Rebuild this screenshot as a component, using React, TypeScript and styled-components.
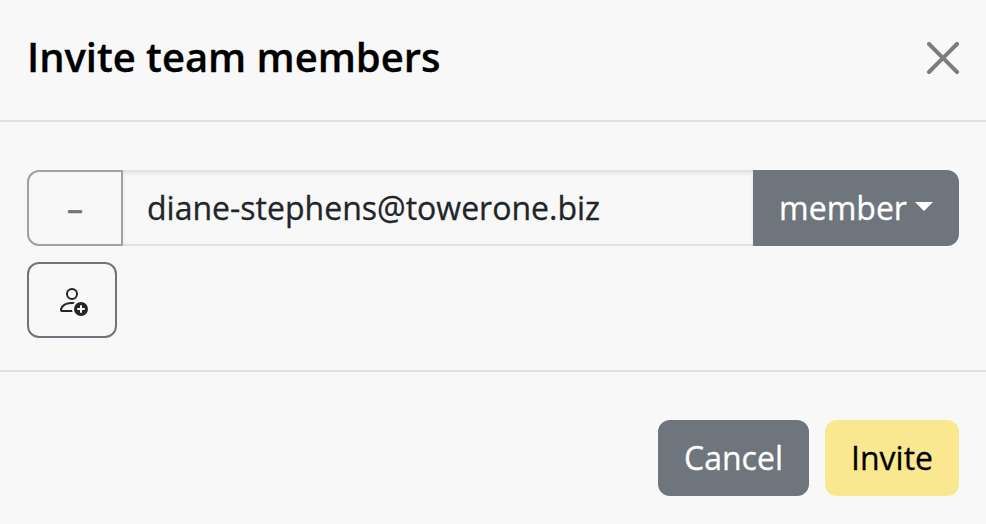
import React from "react";
import styled, { createGlobalStyle, css } from "styled-components";
import { BsPersonAdd } from "react-icons/bs";

const GlobalStyle = createGlobalStyle`
  *, *::before, *::after { box-sizing: border-box; }
  body {
    margin: 0;
    background: #f8f8f8;
    color: #212529;
    font: 400 32px/48px "Open Sans", "Noto Sans", sans-serif;
    -webkit-text-stroke: 0.3px currentColor;
  }
  button, input { font: inherit; margin: 0; }
`;

const Modal = styled.section`
  width: 986px;
  height: 524px;
  display: flex;
  flex-direction: column;
  background: #f8f8f8;
  overflow: hidden;
`;

const Header = styled.header`
  height: 122px;
  padding: 0 27px;
  display: flex;
  align-items: flex-start;
  justify-content: space-between;
  border-bottom: 2px solid #dee2e6;
`;

const Title = styled.h1`
  margin: 27px 0 0;
  font-size: 40px;
  line-height: 60px;
  font-weight: 600;
  letter-spacing: -0.04px;
  color: #000;
`;

const CloseButton = styled.button`
  margin-top: 42px;
  width: 32px;
  height: 32px;
  padding: 0;
  border: 0;
  background: none;
  color: #7c7c7c;
  svg { display: block; }
`;

const Body = styled.div`
  height: 250px;
  padding: 48px 27px 0;
  display: flex;
  flex-direction: column;
  align-items: flex-start;
  gap: 16px;
  border-bottom: 2px solid #dee2e6;
`;

const InviteRow = styled.div`
  width: 100%;
  height: 76px;
  display: flex;
`;

const tones = {
  outline: css`
    border-color: #6c757d;
    background: transparent;
    color: #212529;
  `,
  muted: css`
    border-color: #9da2a6;
    background: transparent;
    color: #757575;
    padding-top: 1px;
    -webkit-text-stroke-width: 0.6px;
  `,
  secondary: css`
    border-color: #6e757c;
    background: #6e757c;
    color: #fff;
  `,
  primary: css`
    border-color: #fae890;
    background: #fae890;
    color: #000;
  `,
};

const Button = styled.button<{
  $tone: keyof typeof tones;
  $width: number;
  $radius?: string;
}>`
  flex: none;
  width: ${(p) => p.$width}px;
  height: 76px;
  padding: 0;
  display: inline-flex;
  align-items: center;
  justify-content: center;
  border: 2px solid;
  border-radius: ${(p) => p.$radius ?? "12px"};
  line-height: 48px;
  white-space: nowrap;
  ${(p) => tones[p.$tone]}
`;

const EmailInput = styled.input`
  flex: 1;
  min-width: 0;
  padding: 0 24px;
  border: solid #dee2e6;
  border-width: 2px 0;
  border-radius: 0;
  background: transparent;
  color: #212529;
  box-shadow: inset 0 2px 4px rgba(0, 0, 0, 0.075);
  outline: none;
`;

const Caret = styled.span`
  margin: -3px 0 0 8px;
  border: solid transparent;
  border-width: 9.6px 9.6px 0;
  border-top-color: currentColor;
`;

const Footer = styled.footer`
  padding: 48px 27px 0;
  display: flex;
  justify-content: flex-end;
  gap: 16px;
`;

export default function App() {
  return (
    <>
      <GlobalStyle />
      <Modal role="dialog" aria-labelledby="invite-title">
        <Header>
          <Title id="invite-title">Invite team members</Title>
          <CloseButton aria-label="Close">
            <svg width="32" height="32" viewBox="0 0 16 16" fill="currentColor">
              <path d="M.293.293a1 1 0 0 1 1.414 0L8 6.586 14.293.293a1 1 0 1 1 1.414 1.414L9.414 8l6.293 6.293a1 1 0 0 1-1.414 1.414L8 9.414l-6.293 6.293a1 1 0 0 1-1.414-1.414L6.586 8 .293 1.707a1 1 0 0 1 0-1.414z" />
            </svg>
          </CloseButton>
        </Header>
        <Body>
          <InviteRow>
            <Button $tone="muted" $width={96} $radius="12px 0 0 12px" aria-label="Remove">
              –
            </Button>
            <EmailInput type="email" aria-label="Email" defaultValue="diane-stephens@towerone.biz" />
            <Button $tone="secondary" $width={206} $radius="0 12px 12px 0">
              member
              <Caret />
            </Button>
          </InviteRow>
          <Button $tone="outline" $width={90} aria-label="Add person">
            <BsPersonAdd size={32} />
          </Button>
        </Body>
        <Footer>
          <Button $tone="secondary" $width={151}>Cancel</Button>
          <Button $tone="primary" $width={134}>Invite</Button>
        </Footer>
      </Modal>
    </>
  );
}
